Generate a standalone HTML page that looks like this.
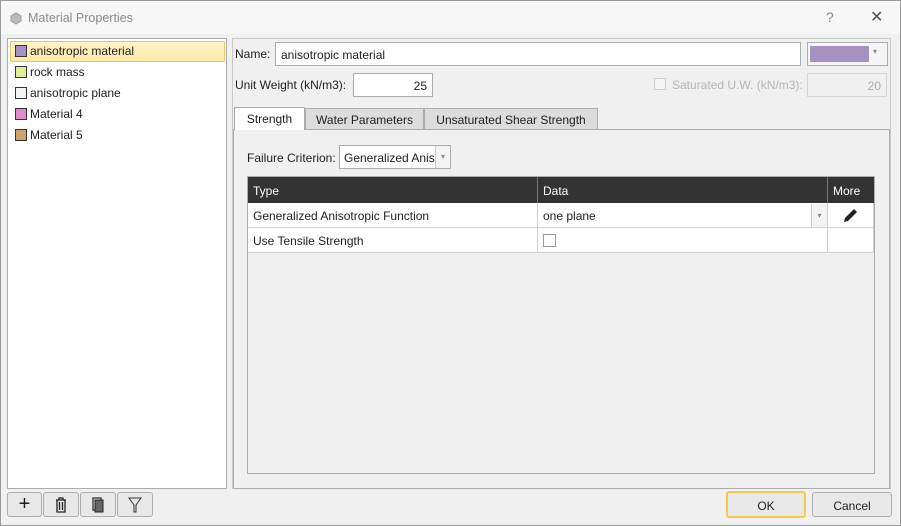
<!DOCTYPE html>
<html><head><style>
*{box-sizing:border-box;margin:0;padding:0}
body{width:901px;height:526px;position:relative;background:#f0f0f0;font-family:"Liberation Sans",sans-serif;font-size:12px;color:#1e1e1e;overflow:hidden;border:1px solid #9a9a9a}
.a{position:absolute}
.inp{position:absolute;background:#fff;border:1px solid #abadb3;padding:3px 5px;font-size:12px}
.sw{position:absolute;left:14px;width:12px;height:12px;border:1px solid #333}
.it{position:absolute;left:29px;font-size:12px}
.btn{position:absolute;border:1px solid #adadad;background:#e8e8e8;border-radius:3px;text-align:center;font-size:12px}
.tab{position:absolute;border:1px solid #acacac;background:#dcdcdc;text-align:center;padding-top:4px;font-size:12px}
.cell{position:absolute;border-right:1px solid #d0d0d0;border-bottom:1px solid #d0d0d0;padding:6px 5px;background:#fff}
</style></head><body>
<div class="a" style="left:0;top:0;width:899px;height:33px;background:#f7f7f7"></div>
<svg class="a" style="left:8px;top:10px" width="14" height="14"><path d="M2 5 L7 2 L12 5 L12 10 L7 13 L2 10Z" fill="#bbb" stroke="#999"/></svg>
<div class="a" style="left:27px;top:10px;color:#8a8a8a;font-size:12.5px">Material Properties</div>
<div class="a" style="left:825px;top:8px;color:#888;font-size:14px">?</div>
<div class="a" style="left:869px;top:6px;color:#555;font-size:16px">✕</div>

<div class="a" style="left:6px;top:37px;width:220px;height:451px;background:#fff;border:1px solid #acacac"></div>
<div class="a" style="left:9px;top:40px;width:215px;height:21px;background:linear-gradient(#fef3c8,#fde8a8);border:1px solid #e5c66f;border-radius:2px"></div>
<div class="sw" style="top:44px;background:#a691c3"></div><div class="it" style="top:43px">anisotropic material</div>
<div class="sw" style="top:65px;background:#e3ee9a"></div><div class="it" style="top:64px">rock mass</div>
<div class="sw" style="top:86px;background:#f3f2f5"></div><div class="it" style="top:85px">anisotropic plane</div>
<div class="sw" style="top:107px;background:#e08ccc"></div><div class="it" style="top:106px">Material 4</div>
<div class="sw" style="top:128px;background:#d0a16b"></div><div class="it" style="top:127px">Material 5</div>

<div class="a" style="left:231px;top:37px;width:659px;height:451px;border:1px solid #c8c8c8"></div>
<div class="a" style="left:234px;top:46px">Name:</div>
<div class="inp" style="left:274px;top:41px;width:526px;height:24px;padding-top:5px">anisotropic material</div>
<div class="a" style="left:806px;top:41px;width:81px;height:24px;border:1px solid #abadb3;background:#f5f5f5"></div>
<div class="a" style="left:809px;top:45px;width:59px;height:16px;background:#a691c3"></div>
<div class="a" style="left:872px;top:46px;color:#888;font-size:8px">▾</div>
<div class="a" style="left:234px;top:77px">Unit Weight (kN/m3):</div>
<div class="inp" style="left:352px;top:72px;width:80px;height:24px;text-align:right;padding-top:5px">25</div>
<div class="a" style="left:653px;top:77px;width:12px;height:12px;border:1px solid #ccc;background:#f5f5f5"></div>
<div class="a" style="left:671px;top:77px;color:#b5b5b5">Saturated U.W. (kN/m3):</div>
<div class="a" style="left:806px;top:72px;width:80px;height:24px;border:1px solid #d5d5d5;text-align:right;padding:5px;color:#aaa">20</div>

<div class="a" style="left:232px;top:128px;width:657px;height:360px;border:1px solid #acacac;background:#f0f0f0"></div>
<div class="tab" style="left:233px;top:106px;width:71px;height:23px;background:#fff;border-bottom:none">Strength</div>
<div class="tab" style="left:304px;top:107px;width:119px;height:22px">Water Parameters</div>
<div class="tab" style="left:423px;top:107px;width:174px;height:22px">Unsaturated Shear Strength</div>

<div class="a" style="left:246px;top:150px">Failure Criterion:</div>
<div class="a" style="left:338px;top:144px;width:112px;height:24px;border:1px solid #abadb3;background:#fff;padding:5px 4px;overflow:hidden;white-space:nowrap">Generalized Anis</div>
<div class="a" style="left:434px;top:145px;width:15px;height:22px;background:#f3f3f3;border-left:1px solid #ccc;color:#888;font-size:8px;text-align:center;padding-top:6px">▾</div>

<div class="a" style="left:246px;top:175px;width:628px;height:298px;border:1px solid #acacac;background:#f0f0f0"></div>
<div class="a" style="left:247px;top:176px;width:626px;height:26px;background:#333"></div>
<div class="a" style="left:252px;top:183px;color:#fff">Type</div>
<div class="a" style="left:536px;top:176px;width:1px;height:26px;background:#777"></div>
<div class="a" style="left:542px;top:183px;color:#fff">Data</div>
<div class="a" style="left:826px;top:176px;width:1px;height:26px;background:#777"></div>
<div class="a" style="left:832px;top:183px;color:#fff">More</div>
<div class="cell" style="left:247px;top:202px;width:290px;height:25px">Generalized Anisotropic Function</div>
<div class="cell" style="left:537px;top:202px;width:290px;height:25px">one plane</div>
<div class="a" style="left:810px;top:203px;width:16px;height:23px;background:#f3f3f3;border-left:1px solid #ccc;color:#888;font-size:8px;text-align:center;padding-top:7px">▾</div>
<div class="cell" style="left:827px;top:202px;width:46px;height:25px"></div>
<svg class="a" style="left:840px;top:206px" width="18" height="18"><path d="M3 15 L4 11 L13 2 L16 5 L7 14 Z" fill="#222"/></svg>
<div class="cell" style="left:247px;top:227px;width:290px;height:25px">Use Tensile Strength</div>
<div class="cell" style="left:537px;top:227px;width:290px;height:25px"></div>
<div class="a" style="left:542px;top:233px;width:13px;height:13px;border:1px solid #999;background:#fff"></div>
<div class="cell" style="left:827px;top:227px;width:46px;height:25px"></div>

<div class="btn" style="left:6px;top:491px;width:35px;height:25px;font-size:20px;line-height:22px">+</div>
<div class="btn" style="left:42px;top:491px;width:36px;height:25px"><svg width="14" height="16" style="margin-top:4px"><path d="M2 3H12M5 3V1H9V3M3 3V15H11V3M5.5 5V13M8.5 5V13" stroke="#222" fill="none" stroke-width="1.3"/></svg></div>
<div class="btn" style="left:79px;top:491px;width:36px;height:25px"><svg width="14" height="16" style="margin-top:4px"><rect x="2" y="1" width="8" height="12" fill="none" stroke="#333" stroke-width="1.3"/><rect x="4" y="3" width="8" height="12" fill="#666" stroke="#222"/></svg></div>
<div class="btn" style="left:116px;top:491px;width:36px;height:25px"><svg width="14" height="16" style="margin-top:4px"><path d="M1 1H13L8 8V15H6V8Z" fill="none" stroke="#333"/></svg></div>
<div class="btn" style="left:725px;top:490px;width:80px;height:27px;border:2px solid #f2c94c;padding-top:6px">OK</div>
<div class="btn" style="left:811px;top:491px;width:80px;height:25px;padding-top:6px">Cancel</div>
</body></html>
